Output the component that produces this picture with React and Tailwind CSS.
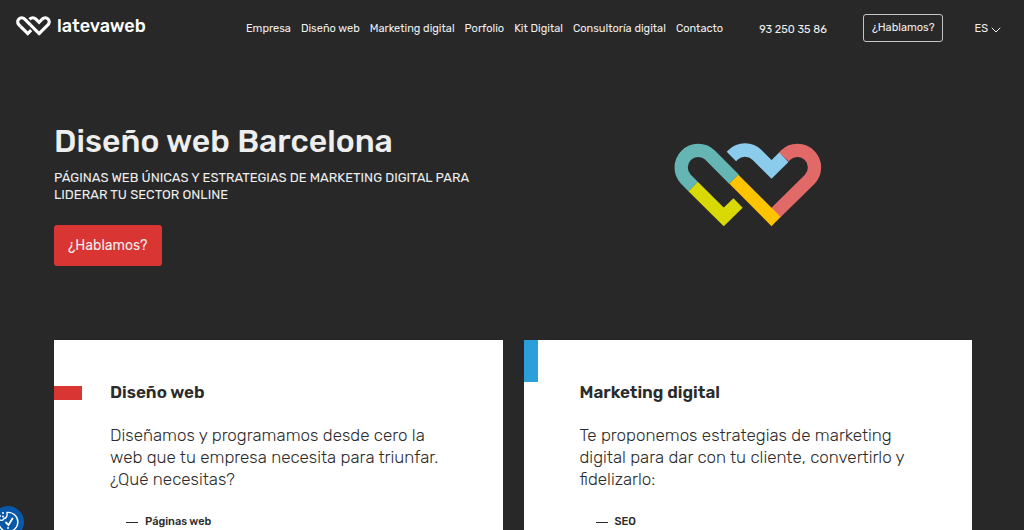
import React from 'react';
import { ChevronDown } from 'lucide-react';

const NAV_ITEMS = [
  'Empresa',
  'Diseño web',
  'Marketing digital',
  'Porfolio',
  'Kit Digital',
  'Consultoría digital',
  'Contacto',
];

const CARDS = [
  {
    title: 'Diseño web',
    text: 'Diseñamos y programamos desde cero la web que tu empresa necesita para triunfar. ¿Qué necesitas?',
    link: 'Páginas web',
    marker: 'top-[46px] h-[14px] w-7 bg-[#d93532]',
  },
  {
    title: 'Marketing digital',
    text: 'Te proponemos estrategias de marketing digital para dar con tu cliente, convertirlo y fidelizarlo:',
    link: 'SEO',
    marker: 'top-0 h-[42px] w-[14px] bg-[#2a9fdc]',
  },
];

const COLORS = {
  teal: '#66b5b5',
  lime: '#d9d906',
  amber: '#ffc400',
  red: '#e16a68',
  sky: '#8bcbec',
};

// Two interlaced hearts, one stroke per coloured section
function Hearts({ className, mono }) {
  const color = (name) => (mono ? '#ffffff' : COLORS[name]);

  return (
    <svg className={className} viewBox="41 40 446 252" fill="none" strokeWidth="40" strokeMiterlimit="10" aria-hidden="true">
      <path d="M98.5 170.5 L191 262 L234 220" stroke={color('lime')} />
      <path d="M98.5 170.5 L76.6 148.4 A51.5 51.5 0 0 1 149.4 75.6 L222 148.5" stroke={color('teal')} />
      <path d="M372 82 L377.6 75.6 A51.5 51.5 0 0 1 450.4 148.4 L335 262" stroke={color('red')} />
      <path d="M214 80.2 L218.6 75.6 A51.5 51.5 0 0 1 291.4 75.6 L335 119 L372 82.5" stroke={color('sky')} />
      <path d="M235 135 L362 262 L335 290 L208 162 Z" fill={color('amber')} stroke="none" />
    </svg>
  );
}

function Header() {
  return (
    <header className="flex h-14 items-center justify-between pl-4 pr-5 text-[11px]">
      <a href="#" className="flex items-center gap-1.5 pb-1">
        <Hearts mono className="h-5 w-[35px]" />
        <span className="text-lg font-medium leading-5 text-white">latevaweb</span>
      </a>
      <div className="flex items-center">
        <nav className="flex items-center gap-2.5 pt-[3px]">
          {NAV_ITEMS.map((item) => (
            <a key={item} href="#">{item}</a>
          ))}
        </nav>
        <a href="tel:932503586" className="ml-9 pt-1">93 250 35 86</a>
        <button className="ml-9 h-7 rounded-[3px] border border-[#c4c4c4] px-2 leading-4">¿Hablamos?</button>
        <button className="ml-[31px] flex items-center pt-[3px]">
          ES
          <ChevronDown className="h-4 w-4" strokeWidth={1.5} />
        </button>
      </div>
    </header>
  );
}

function ServiceCard({ title, text, link, marker }) {
  return (
    <article className="relative bg-white px-14 pb-10 pt-10 text-[#2b2b2b]">
      <span className={`absolute left-0 ${marker}`} />
      <h2 className="text-[17px] font-semibold leading-6">{title}</h2>
      <p className="mt-5 text-[17px] font-light leading-[22px]">{text}</p>
      <ul className="mt-6 pl-4 text-[11px] font-medium leading-4">
        <li>
          <a href="#" className="flex items-center gap-[7px]">
            <span className="h-px w-3 bg-[#2b2b2b]" />
            {link}
          </a>
        </li>
      </ul>
    </article>
  );
}

function App() {
  return (
    <div className="h-screen overflow-hidden bg-[#282828] font-['Rubik',Roboto,sans-serif] text-[#eeeeee]">
      <Header />

      <main className="pl-[54px] pr-[52px]">
        {/* Hero */}
        <section className="grid h-[284px] grid-cols-2 gap-[21px] pt-[65px]">
          <div>
            <h1 className="whitespace-nowrap text-[32px] font-medium leading-10">Diseño web Barcelona</h1>
            <p className="mt-2 text-[13px] leading-[17px]">
              PÁGINAS WEB ÚNICAS Y ESTRATEGIAS DE MARKETING DIGITAL PARA LIDERAR TU SECTOR ONLINE
            </p>
            <button className="mt-[22px] h-[41px] rounded-[3px] bg-[#d93532] px-3.5 text-sm leading-5">¿Hablamos?</button>
          </div>
          <div className="flex items-start justify-center pt-[22px]">
            <Hearts className="h-[84px] w-[148px]" />
          </div>
        </section>

        {/* Services */}
        <section className="grid grid-cols-2 gap-[21px]">
          {CARDS.map((card) => (
            <ServiceCard key={card.title} {...card} />
          ))}
        </section>
      </main>

      {/* Cookie settings */}
      <button
        aria-label="Cookies"
        className="fixed -bottom-2 -left-2 flex h-8 w-8 items-center justify-center rounded-full bg-[#0958a8]"
      >
        <svg className="h-6 w-6" viewBox="0 0 24 24" fill="none" stroke="#ffffff" strokeWidth="1.4" strokeLinecap="round">
          <path d="M11 2.5 A9.6 9.6 0 1 1 3 9.5 C5 11 7.500 10.500 8 8.500 C10.500 8.500 11.500 5.500 11 2.500 Z" strokeLinejoin="round" />
          <path d="M10 12.500 L12.500 15 L16.500 8.500" strokeWidth="1.8" />
          <path d="M7 3 h.01 M4 6 h.01 M7 6.500 h.01 M12 18 h.01" strokeWidth="2" />
        </svg>
      </button>
    </div>
  );
}

export default App;
